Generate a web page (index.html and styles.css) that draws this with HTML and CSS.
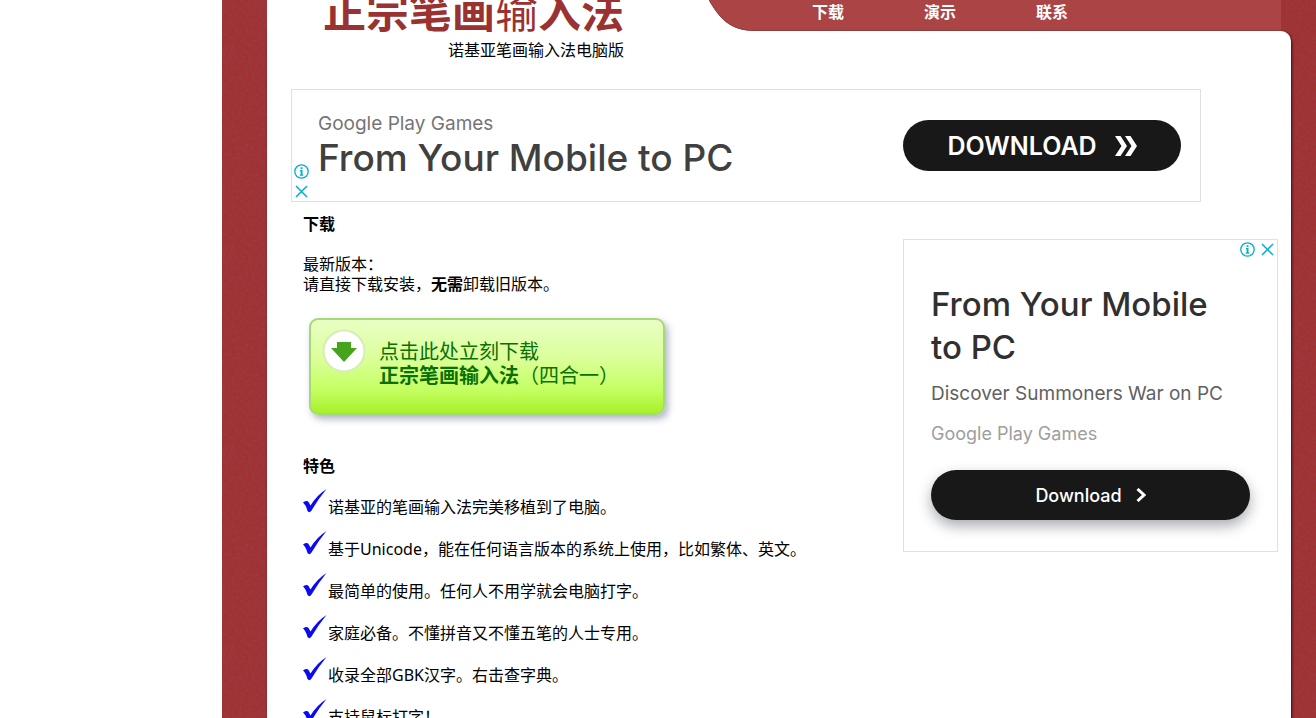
FILE: index.html
```html
<!DOCTYPE html>
<html lang="zh-CN">
<head>
  <meta charset="UTF-8">
  <meta name="viewport" content="width=device-width, initial-scale=1.0">
  <title>正宗笔画输入法</title>
  <link rel="stylesheet" href="styles.css">
</head>
<body>
  <svg width="0" height="0" class="symbols" aria-hidden="true">
    <symbol id="info" viewBox="0 0 15 15">
      <circle cx="7.5" cy="7.5" r="6.7" fill="none" stroke="#00aecd" stroke-width="1.3"/>
      <path d="M6.600 3.200h1.900v1.800h-1.900zM6 6h2.500v4.600h.8v1.200H5.800v-1.200h.8V7.200H6z" fill="#00aecd"/>
    </symbol>
    <symbol id="close" viewBox="0 0 15 15">
      <path d="M2 2L13 13M13 2L2 13" fill="none" stroke="#00aecd" stroke-width="1.500"/>
    </symbol>
    <symbol id="tick" viewBox="0 0 24 24">
      <path d="M0 13.500Q4 11 5.500 13L7.500 16.500Q14 6 23.500 0Q16 9 8.500 21.500Q6.500 24.500 4.500 22Q3 16 0 13.500Z" fill="#0a0af5"/>
    </symbol>
  </svg>

  <div class="page">
    <div class="sheet">
      <header class="header">
        <div class="brand">
          <h1>正宗笔画<span>输</span>入法</h1>
        </div>
        <svg class="curve" viewBox="0 0 46 31" aria-hidden="true">
          <path class="curve-back" d="M0 0H46V31H0Z"/>
          <path class="curve-fill" d="M0 0C10 17 20 31 46 31V0Z"/>
          <path class="curve-line" d="M0 0C10 17 20 30.500 46 30.500"/>
        </svg>
        <nav class="nav">
          <a href="#download">下载</a>
          <a href="#demo">演示</a>
          <a href="#contact">联系</a>
        </nav>
      </header>

      <main class="content">
        <p class="tagline">诺基亚笔画输入法电脑版</p>

        <section class="banner">
          <div class="banner-marks">
            <svg class="mark"><use href="#info"/></svg>
            <svg class="mark"><use href="#close"/></svg>
          </div>
          <div class="banner-text">
            <p class="banner-brand">Google Play Games</p>
            <p class="banner-title">From Your Mobile to PC</p>
          </div>
          <button class="banner-btn" type="button">
            DOWNLOAD
            <svg width="22" height="20" viewBox="0 0 22 20" aria-hidden="true">
              <path d="M0 0H5.500L12 10L5.500 20H0L6.500 10ZM10 0H15.500L22 10L15.500 20H10L16.500 10Z" fill="#fff"/>
            </svg>
          </button>
        </section>

        <div class="columns">
          <div class="main">
            <h2 id="download">下载</h2>
            <p class="version">最新版本：<br>请直接下载安装，<b>无需</b>卸载旧版本。</p>

            <a class="download" href="#download">
              <svg class="download-icon" viewBox="0 0 44 44" aria-hidden="true">
                <circle cx="22" cy="22" r="20.500" fill="#fff" stroke="#d6edb4" stroke-width="2"/>
                <path d="M15 13H29V19H35L22 33L9 19H15Z" fill="#45a31c"/>
              </svg>
              <span>点击此处立刻下载<br><b>正宗笔画输入法</b>（四合一）</span>
            </a>

            <h2>特色</h2>
            <ul class="features">
              <li><svg class="tick"><use href="#tick"/></svg><span>诺基亚的笔画输入法完美移植到了电脑。</span></li>
              <li><svg class="tick"><use href="#tick"/></svg><span>基于Unicode，能在任何语言版本的系统上使用，比如繁体、英文。</span></li>
              <li><svg class="tick"><use href="#tick"/></svg><span>最简单的使用。任何人不用学就会电脑打字。</span></li>
              <li><svg class="tick"><use href="#tick"/></svg><span>家庭必备。不懂拼音又不懂五笔的人士专用。</span></li>
              <li><svg class="tick"><use href="#tick"/></svg><span>收录全部GBK汉字。右击查字典。</span></li>
              <li><svg class="tick"><use href="#tick"/></svg><span>支持鼠标打字！</span></li>
            </ul>
          </div>

          <aside class="card">
            <div class="card-marks">
              <svg class="mark"><use href="#info"/></svg>
              <svg class="mark"><use href="#close"/></svg>
            </div>
            <p class="card-title">From Your Mobile<br>to PC</p>
            <p class="card-text">Discover Summoners War on PC</p>
            <p class="card-brand">Google Play Games</p>
            <button class="card-btn" type="button">
              Download
              <svg width="10" height="14" viewBox="0 0 10 14" aria-hidden="true">
                <path d="M1.500 1L8 7L1.500 13" fill="none" stroke="#fff" stroke-width="3"/>
              </svg>
            </button>
          </aside>
        </div>
      </main>
    </div>
  </div>
</body>
</html>
```
FILE: styles.css
```css
* {
  margin: 0;
  padding: 0;
  box-sizing: border-box;
}

body {
  height: 100vh;
  overflow: hidden;
  background-color: #fff;
  color: #000;
  font-family: "Noto Sans", "Noto Sans CJK SC", sans-serif;
  font-size: 16px;
  line-height: 20px;
}

.symbols {
  position: absolute;
}

/* red felt behind the sheet */
.page {
  min-height: 100vh;
  margin-left: 222px;
  padding: 0 25px 0 45px;
  background-color: #a03234;
  background-image: url("data:image/svg+xml,%3Csvg xmlns='http://www.w3.org/2000/svg' width='200' height='200'%3E%3Cfilter id='n'%3E%3CfeTurbulence type='fractalNoise' baseFrequency='.3' numOctaves='3' stitchTiles='stitch'/%3E%3CfeColorMatrix values='0 0 0 0 .3 0 0 0 0 .05 0 0 0 0 .06 1.8 0 0 0 -.75'/%3E%3C/filter%3E%3Crect width='200' height='200' filter='url(%23n)'/%3E%3C/svg%3E");
}

.header {
  display: flex;
  height: 31px;
  margin-right: 10px;
}

.brand {
  width: 442px;
  padding-left: 56px;
  background-color: #fff;
}

.brand h1 {
  color: #9b3232;
  font-size: 43px;
  line-height: 24px;
  white-space: nowrap;
}

.brand h1 span {
  font-weight: normal;
}

.curve {
  width: 46px;
  height: 31px;
}

.curve-back {
  fill: #fff;
}

.curve-fill {
  fill: #ab4545;
}

.curve-line {
  fill: none;
  stroke: #8f3c3c;
}

.nav {
  flex: 1;
  display: flex;
  gap: 80px;
  padding-left: 57px;
  background-color: #ab4545;
  border-bottom: 1px solid #8f3c3c;
}

.nav a {
  color: #fff;
  font-weight: bold;
  line-height: 24px;
  text-decoration: none;
}

.content {
  min-height: calc(100vh - 31px);
  padding: 9px 13px 0 24px;
  background-color: #fff;
  border-top-right-radius: 10px;
  box-shadow: 1px 1px 3px rgba(40, 0, 0, 0.8);
}

.tagline {
  width: 333px;
  text-align: right;
}

.banner {
  display: flex;
  align-items: center;
  max-width: 910px;
  height: 113px;
  margin-top: 29px;
  padding-right: 19px;
  border: 1px solid #e0e0e0;
  font-family: Inter, sans-serif;
}

.banner-marks {
  display: flex;
  flex-direction: column;
  align-self: flex-end;
  gap: 5px;
  padding: 0 9px 2px 2px;
}

.mark {
  width: 15px;
  height: 15px;
}

.banner-text {
  flex: 1;
}

.banner-brand {
  color: #757575;
  font-size: 19px;
  line-height: 24px;
}

.banner-title {
  color: #404040;
  font-size: 37px;
  font-weight: 500;
  line-height: 44px;
}

.banner-btn,
.card-btn {
  display: flex;
  align-items: center;
  justify-content: center;
  background-color: #181818;
  color: #fff;
  border: none;
  border-radius: 26px;
  font-family: Inter, sans-serif;
  cursor: pointer;
}

.banner-btn {
  gap: 18px;
  width: 278px;
  height: 51px;
  font-size: 25px;
  font-weight: 600;
}

.columns {
  display: flex;
  align-items: flex-start;
}

.main {
  flex: 1;
  padding: 12px 0 0 12px;
}

.main h2 {
  font-size: 16px;
  line-height: 20px;
}

.version {
  margin-top: 20px;
}

.download {
  display: flex;
  align-items: flex-start;
  gap: 13px;
  width: 356px;
  height: 97px;
  margin: 24px 0 41px 6px;
  padding: 9px 11px;
  background-image: linear-gradient(#e9ffc4, #dcff9c 40%, #c4ff62 75%, #a8f02c);
  border: 2px solid #a5d878;
  border-radius: 9px;
  box-shadow: 3px 4px 7px rgba(60, 70, 110, 0.4);
  color: #0a7000;
  font-size: 20px;
  line-height: 24px;
  text-decoration: none;
}

.download-icon {
  width: 44px;
  height: 44px;
}

.download span {
  padding-top: 11px;
}

.features {
  list-style: none;
  margin-top: 10px;
}

.features li {
  display: flex;
  align-items: flex-start;
  gap: 1px;
  height: 42px;
  white-space: nowrap;
}

.features span {
  padding-top: 11px;
}

.tick {
  width: 24px;
  height: 24px;
  margin-top: 3px;
}

.card {
  width: 375px;
  margin-top: 37px;
  padding: 2px 27px 31px;
  border: 1px solid #e0e0e0;
  font-family: Inter, sans-serif;
}

.card-marks {
  display: flex;
  justify-content: flex-end;
  gap: 5px;
  margin-right: -25px;
}

.card-title {
  margin-top: 26px;
  color: #303030;
  font-size: 33px;
  font-weight: 500;
  line-height: 43px;
}

.card-text {
  margin-top: 13px;
  color: #616161;
  font-size: 19px;
  line-height: 24px;
}

.card-brand {
  margin-top: 16px;
  color: #9e9e9e;
  font-size: 18px;
  line-height: 24px;
}

.card-btn {
  gap: 14px;
  width: 100%;
  height: 50px;
  margin-top: 24px;
  box-shadow: 0 6px 14px rgba(40, 45, 60, 0.4);
  font-size: 18px;
  font-weight: 500;
}
```
